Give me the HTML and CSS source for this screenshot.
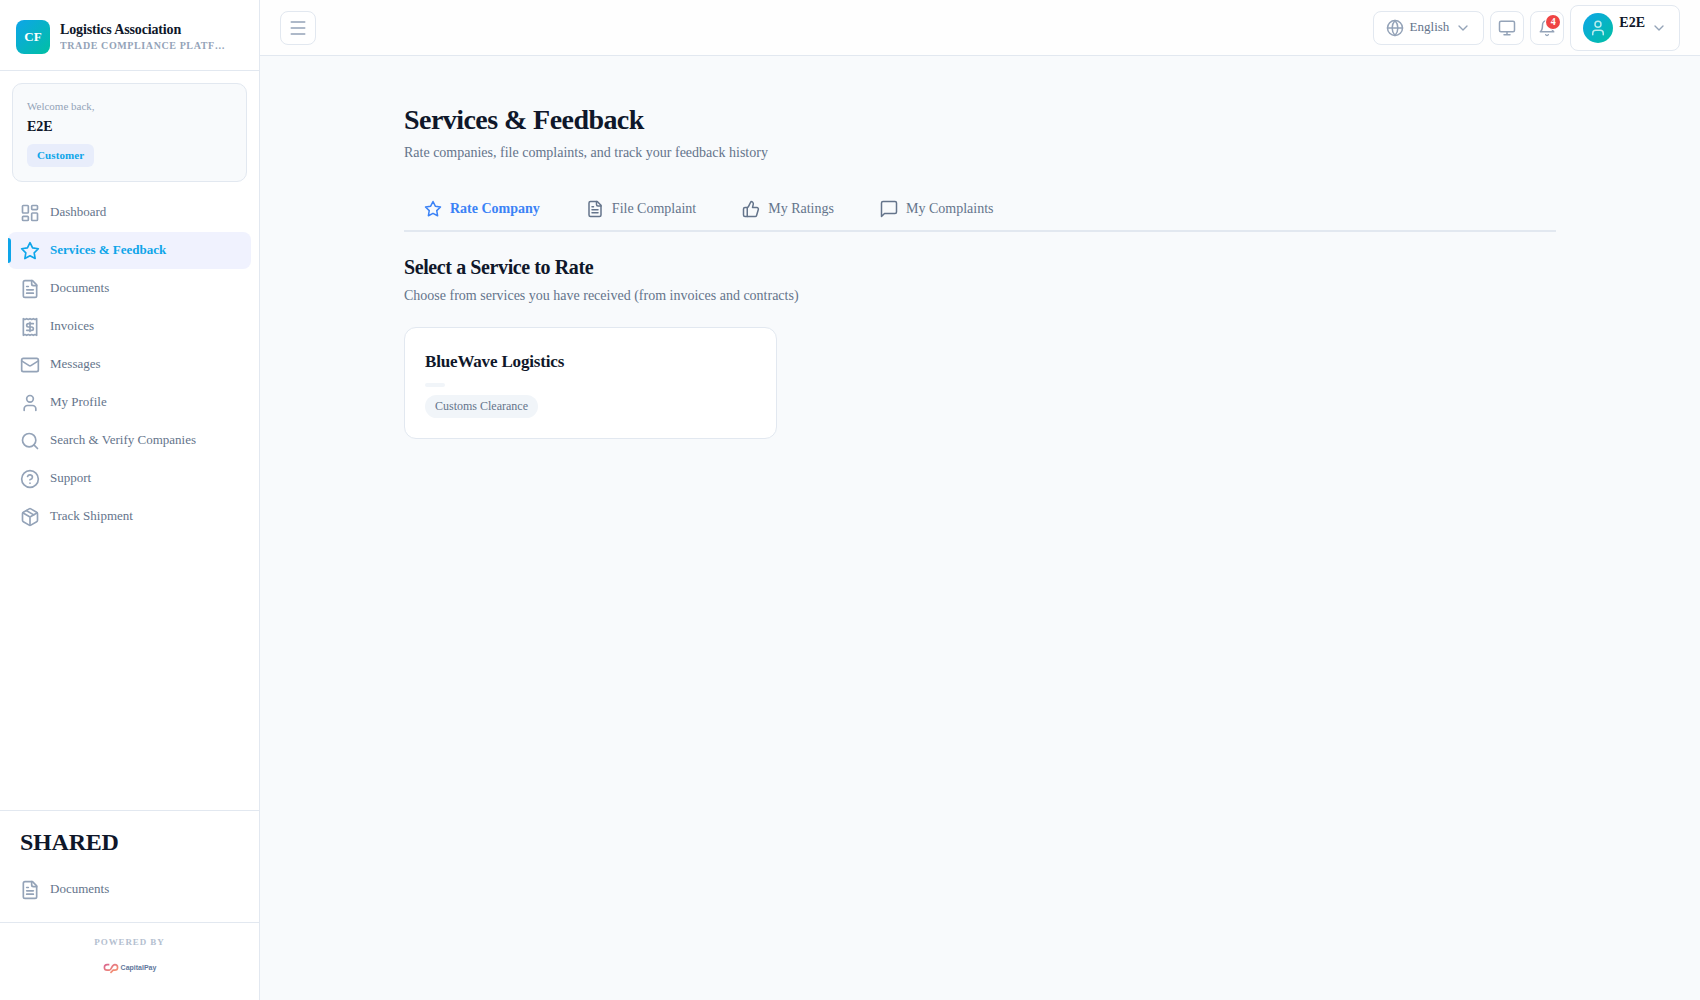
FILE: index.html
```html
<!DOCTYPE html>
<html lang="en">
  <head>
    <meta charset="utf-8" />
    <title>Services &amp; Feedback</title>
    <link rel="stylesheet" href="styles.css" />
  </head>
  <body>
    <!-- shared icons -->
    <svg class="sprite" aria-hidden="true">
      <symbol id="i-star" viewBox="0 0 24 24">
        <polygon points="12 2 15.09 8.26 22 9.27 17 14.14 18.18 21.02 12 17.77 5.82 21.02 7 14.14 2 9.27 8.91 8.26 12 2" />
      </symbol>
      <symbol id="i-file" viewBox="0 0 24 24">
        <path d="M15 2H6a2 2 0 0 0-2 2v16a2 2 0 0 0 2 2h12a2 2 0 0 0 2-2V7Z" />
        <path d="M14 2v4a2 2 0 0 0 2 2h4M10 9H8M16 13H8M16 17H8" />
      </symbol>
      <symbol id="i-user" viewBox="0 0 24 24">
        <path d="M19 21v-2a4 4 0 0 0-4-4H9a4 4 0 0 0-4 4v2" />
        <circle cx="12" cy="7" r="4" />
      </symbol>
      <symbol id="i-chevron" viewBox="0 0 24 24">
        <path d="m6 9 6 6 6-6" />
      </symbol>
    </svg>

    <div class="layout">
      <aside class="sidebar">
        <div class="brand">
          <div class="brand-logo">CF</div>
          <div class="brand-text">
            <div class="brand-name">Logistics Association</div>
            <div class="brand-sub">Trade Compliance Platform</div>
          </div>
        </div>

        <div class="welcome">
          <div class="welcome-label">Welcome back,</div>
          <div class="welcome-name">E2E</div>
          <span class="role-badge">Customer</span>
        </div>

        <nav class="side-nav">
          <a href="#" class="nav-item">
            <svg class="icon" viewBox="0 0 24 24">
              <rect x="3" y="3" width="7" height="9" rx="1" />
              <rect x="14" y="3" width="7" height="5" rx="1" />
              <rect x="14" y="12" width="7" height="9" rx="1" />
              <rect x="3" y="16" width="7" height="5" rx="1" />
            </svg>
            <span>Dashboard</span>
          </a>
          <a href="#" class="nav-item active">
            <svg class="icon"><use href="#i-star" /></svg>
            <span>Services &amp; Feedback</span>
          </a>
          <a href="#" class="nav-item">
            <svg class="icon"><use href="#i-file" /></svg>
            <span>Documents</span>
          </a>
          <a href="#" class="nav-item">
            <svg class="icon" viewBox="0 0 24 24">
              <path d="M4 2v20l2-1 2 1 2-1 2 1 2-1 2 1 2-1 2 1V2l-2 1-2-1-2 1-2-1-2 1-2-1-2 1Z" />
              <path d="M16 8h-6a2 2 0 1 0 0 4h4a2 2 0 1 1 0 4H8M12 17.5v-11" />
            </svg>
            <span>Invoices</span>
          </a>
          <a href="#" class="nav-item">
            <svg class="icon" viewBox="0 0 24 24">
              <rect x="2" y="4" width="20" height="16" rx="2" />
              <path d="m22 7-8.97 5.7a1.94 1.94 0 0 1-2.06 0L2 7" />
            </svg>
            <span>Messages</span>
          </a>
          <a href="#" class="nav-item">
            <svg class="icon"><use href="#i-user" /></svg>
            <span>My Profile</span>
          </a>
          <a href="#" class="nav-item">
            <svg class="icon" viewBox="0 0 24 24">
              <circle cx="11" cy="11" r="8" />
              <path d="m21 21-4.3-4.3" />
            </svg>
            <span>Search &amp; Verify Companies</span>
          </a>
          <a href="#" class="nav-item">
            <svg class="icon" viewBox="0 0 24 24">
              <circle cx="12" cy="12" r="10" />
              <path d="M9.09 9a3 3 0 0 1 5.83 1c0 2-3 3-3 3M12 17h.01" />
            </svg>
            <span>Support</span>
          </a>
          <a href="#" class="nav-item">
            <svg class="icon" viewBox="0 0 24 24">
              <path d="m7.5 4.27 9 5.15" />
              <path d="M21 8a2 2 0 0 0-1-1.73l-7-4a2 2 0 0 0-2 0l-7 4A2 2 0 0 0 3 8v8a2 2 0 0 0 1 1.73l7 4a2 2 0 0 0 2 0l7-4A2 2 0 0 0 21 16Z" />
              <path d="m3.3 7 8.7 5 8.7-5M12 22V12" />
            </svg>
            <span>Track Shipment</span>
          </a>
        </nav>

        <div class="shared">
          <h3>SHARED</h3>
          <a href="#" class="nav-item">
            <svg class="icon"><use href="#i-file" /></svg>
            <span>Documents</span>
          </a>
        </div>

        <div class="powered">
          <div class="powered-label">POWERED BY</div>
          <div class="powered-logo">
            <svg viewBox="0 0 28 20">
              <defs>
                <linearGradient id="cp" x1="0" y1="0" x2="1" y2="1">
                  <stop offset="0" stop-color="#d9668f" />
                  <stop offset="1" stop-color="#fb9a6a" />
                </linearGradient>
              </defs>
              <path d="M11 3H7a5 5 0 0 0 0 10h4c4 0 4-10 10-10a5 5 0 0 1 0 10h-3l-5 5" />
            </svg>
            <span>CapitalPay</span>
          </div>
        </div>
      </aside>

      <div class="page">
        <header class="topbar">
          <button class="btn btn-menu" aria-label="Toggle menu">
            <svg class="icon" viewBox="0 0 24 24"><path d="M3 4h18M3 12h18M3 20h18" /></svg>
          </button>

          <div class="topbar-right">
            <button class="btn btn-lang">
              <svg class="icon" viewBox="0 0 24 24">
                <circle cx="12" cy="12" r="10" />
                <path d="M12 2a15 15 0 0 0 0 20 15 15 0 0 0 0-20M2 12h20" />
              </svg>
              <span>English</span>
              <svg class="icon chevron"><use href="#i-chevron" /></svg>
            </button>
            <button class="btn btn-square" aria-label="Display">
              <svg class="icon" viewBox="0 0 24 24">
                <rect x="2" y="3" width="20" height="14" rx="2" />
                <path d="M8 21h8M12 17v4" />
              </svg>
            </button>
            <button class="btn btn-square" aria-label="Notifications">
              <svg class="icon" viewBox="0 0 24 24">
                <path d="M6 8a6 6 0 0 1 12 0c0 7 3 9 3 9H3s3-2 3-9M10.3 21a1.94 1.94 0 0 0 3.4 0" />
              </svg>
              <span class="count">4</span>
            </button>
            <button class="btn btn-user">
              <span class="avatar">
                <svg class="icon"><use href="#i-user" /></svg>
              </span>
              <span class="user-name">E2E</span>
              <svg class="icon chevron"><use href="#i-chevron" /></svg>
            </button>
          </div>
        </header>

        <main class="content">
          <h1>Services &amp; Feedback</h1>
          <p class="lead">Rate companies, file complaints, and track your feedback history</p>

          <div class="tabs">
            <button class="tab active">
              <svg class="icon"><use href="#i-star" /></svg>
              <span>Rate Company</span>
            </button>
            <button class="tab">
              <svg class="icon"><use href="#i-file" /></svg>
              <span>File Complaint</span>
            </button>
            <button class="tab">
              <svg class="icon" viewBox="0 0 24 24">
                <path d="M7 10v12" />
                <path d="M15 5.88 14 10h5.83a2 2 0 0 1 1.92 2.56l-2.33 8A2 2 0 0 1 17.5 22H4a2 2 0 0 1-2-2v-8a2 2 0 0 1 2-2h2.76a2 2 0 0 0 1.79-1.11L12 2a3.13 3.13 0 0 1 3 3.88Z" />
              </svg>
              <span>My Ratings</span>
            </button>
            <button class="tab">
              <svg class="icon" viewBox="0 0 24 24">
                <path d="M22 4a2 2 0 0 0-2-2H4a2 2 0 0 0-2 2v18l4-4h14a2 2 0 0 0 2-2Z" />
              </svg>
              <span>My Complaints</span>
            </button>
          </div>

          <h2>Select a Service to Rate</h2>
          <p class="hint">Choose from services you have received (from invoices and contracts)</p>

          <div class="services">
            <div class="service-card">
              <h3>BlueWave Logistics</h3>
              <div class="chip chip-empty"></div>
              <div class="chip">Customs Clearance</div>
            </div>
          </div>
        </main>
      </div>
    </div>
  </body>
</html>
```
FILE: styles.css
```css
* {
  box-sizing: border-box;
}

body {
  margin: 0;
  font-family: "Liberation Serif", serif;
  font-size: 14px;
  line-height: 1.6;
  color: #0f172a;
  background: #f8fafc;
}

h1,
h2,
h3,
p {
  margin: 0;
}

h1,
h2 {
  letter-spacing: -0.02em;
}

h3 {
  letter-spacing: -0.01em;
}

a {
  color: inherit;
  text-decoration: none;
}

button {
  font: inherit;
  color: inherit;
  cursor: pointer;
}

.sprite {
  display: none;
}

.icon {
  width: 20px;
  height: 20px;
  flex-shrink: 0;
  fill: none;
  stroke: #94a3b8;
  stroke-width: 2;
  stroke-linecap: round;
  stroke-linejoin: round;
}

.layout {
  display: flex;
  min-height: 100vh;
}

/* Sidebar */
.sidebar {
  width: 260px;
  flex-shrink: 0;
  display: flex;
  flex-direction: column;
  background: #fff;
  border-right: 1px solid #e2e8f0;
}

.brand {
  display: flex;
  align-items: center;
  gap: 10px;
  padding: 18px 32px 14px 16px;
  border-bottom: 1px solid #e2e8f0;
}

.brand-logo {
  width: 34px;
  height: 34px;
  margin: 2px 0;
  flex-shrink: 0;
  border-radius: 8px;
  background: linear-gradient(135deg, #0ea5e9, #00c0a3);
  color: #fff;
  font-size: 13px;
  font-weight: bold;
  line-height: 34px;
  text-align: center;
}

.brand-text {
  min-width: 0;
}

.brand-name {
  font-weight: bold;
  line-height: 18px;
  letter-spacing: -0.01em;
}

.brand-sub {
  font-size: 10px;
  font-weight: bold;
  line-height: 14px;
  letter-spacing: 0.06em;
  text-transform: uppercase;
  color: #94a3b8;
  overflow: hidden;
  white-space: nowrap;
  text-overflow: ellipsis;
}

.welcome {
  margin: 12px;
  padding: 14px;
  border: 1px solid #e2e8f0;
  border-radius: 10px;
  background: #f8fafc;
}

.welcome-label {
  font-size: 11px;
  line-height: 17px;
  color: #94a3b8;
}

.welcome-name {
  font-weight: bold;
  line-height: 23px;
  margin-bottom: 6px;
}

.role-badge {
  display: block;
  width: fit-content;
  padding: 3px 10px;
  border-radius: 6px;
  background: #e8edfb;
  color: #0ea5e9;
  font-size: 11px;
  font-weight: bold;
  line-height: 17px;
  letter-spacing: 0.01em;
}

.side-nav {
  flex: 1;
  display: flex;
  flex-direction: column;
  gap: 1px;
  padding: 0 8px;
}

.nav-item {
  position: relative;
  display: flex;
  align-items: center;
  gap: 10px;
  padding: 0 12px;
  height: 37px;
  border-radius: 8px;
  font-size: 13px;
  color: #64748b;
}

.nav-item.active {
  background: #f0f2fe;
  color: #0ea5e9;
  font-weight: bold;
}

.nav-item.active .icon {
  stroke: #0ea5e9;
}

.nav-item.active::before {
  content: "";
  position: absolute;
  left: 0;
  top: 6px;
  bottom: 6px;
  width: 3px;
  border-radius: 0 3px 3px 0;
  background: #0ea5e9;
}

.shared {
  padding: 12px 8px 14px;
  border-top: 1px solid #e2e8f0;
}

.shared h3 {
  padding: 0 12px;
  margin-bottom: 10px;
  font-size: 24px;
  line-height: 38px;
}

.powered {
  height: 78px;
  padding-top: 12px;
  border-top: 1px solid #e2e8f0;
  text-align: center;
}

.powered-label {
  font-size: 9px;
  font-weight: bold;
  line-height: 14px;
  letter-spacing: 0.1em;
  color: #b4c0d0;
}

.powered-logo {
  display: flex;
  justify-content: center;
  align-items: center;
  gap: 2px;
  margin-top: 13px;
  font-family: "Liberation Sans", sans-serif;
  font-size: 7px;
  font-weight: bold;
  line-height: 12px;
  color: #5f779c;
}

.powered-logo svg {
  width: 16px;
  height: 11px;
  fill: none;
  stroke: url(#cp);
  stroke-width: 3;
}

/* Top bar */
.page {
  flex: 1;
  min-width: 0;
}

.topbar {
  display: flex;
  justify-content: space-between;
  align-items: center;
  height: 56px;
  padding: 0 20px;
  background: #fefefe;
  border-bottom: 1px solid #e2e8f0;
}

.topbar-right {
  display: flex;
  align-items: center;
  gap: 6px;
}

.btn {
  display: flex;
  align-items: center;
  justify-content: center;
  height: 34px;
  padding: 0;
  border: 1px solid #e2e8f0;
  border-radius: 8px;
  background: #fff;
}

.btn-menu {
  width: 36px;
}

.btn-menu .icon,
.btn-lang .icon,
.btn-square .icon {
  width: 18px;
  height: 18px;
}

.btn-square {
  position: relative;
  width: 34px;
}

.btn-lang {
  gap: 6px;
  padding: 0 12px;
  font-size: 13px;
  color: #64748b;
}

.btn .chevron {
  width: 16px;
  height: 16px;
}

.count {
  position: absolute;
  top: 3px;
  right: 3px;
  width: 14px;
  height: 14px;
  border-radius: 50%;
  background: #ef4444;
  box-shadow: 0 0 0 1px #fff;
  color: #fff;
  font-size: 10px;
  font-weight: bold;
  line-height: 14px;
}

.btn-user {
  gap: 6px;
  height: 46px;
  padding: 0 12px;
}

.avatar {
  display: flex;
  align-items: center;
  justify-content: center;
  width: 30px;
  height: 30px;
  border-radius: 50%;
  background: linear-gradient(135deg, #0ea5e9, #00c0a3);
}

.avatar .icon {
  width: 18px;
  height: 18px;
  stroke: #b8ecec;
}

.user-name {
  align-self: flex-start;
  padding-top: 6px;
  font-weight: bold;
}

/* Content */
.content {
  max-width: 1200px;
  margin: 0 auto;
  padding: 46px 24px;
}

h1 {
  font-size: 28px;
  line-height: 36px;
}

.lead {
  margin: 4px 0 22px;
  color: #64748b;
}

.tabs {
  display: flex;
  gap: 6px;
  margin-bottom: 22px;
  border-bottom: 2px solid #e2e8f0;
}

.tab {
  display: flex;
  align-items: center;
  gap: 8px;
  height: 44px;
  padding: 2px 20px 0;
  border: 0;
  background: none;
  color: #64748b;
}

.tab .icon {
  width: 18px;
  height: 18px;
  stroke: #64748b;
}

.tab.active {
  color: #3b82f6;
  font-weight: bold;
}

.tab.active .icon {
  stroke: #3b82f6;
}

h2 {
  font-size: 20px;
  line-height: 26px;
}

.hint {
  margin: 5px 0 19px;
  color: #64748b;
}

.services {
  display: grid;
  grid-template-columns: repeat(3, 1fr);
  gap: 16px;
}

.service-card {
  display: flex;
  flex-direction: column;
  align-items: flex-start;
  gap: 8px;
  padding: 20px;
  border: 1px solid #e2e8f0;
  border-radius: 12px;
  background: #fff;
}

.service-card h3 {
  font-size: 17px;
  line-height: 27px;
}

.chip {
  padding: 2px 10px;
  border-radius: 12px;
  background: #f1f5f9;
  color: #64748b;
  font-size: 12px;
  line-height: 19px;
}

.chip-empty {
  border-radius: 2px;
}
```
